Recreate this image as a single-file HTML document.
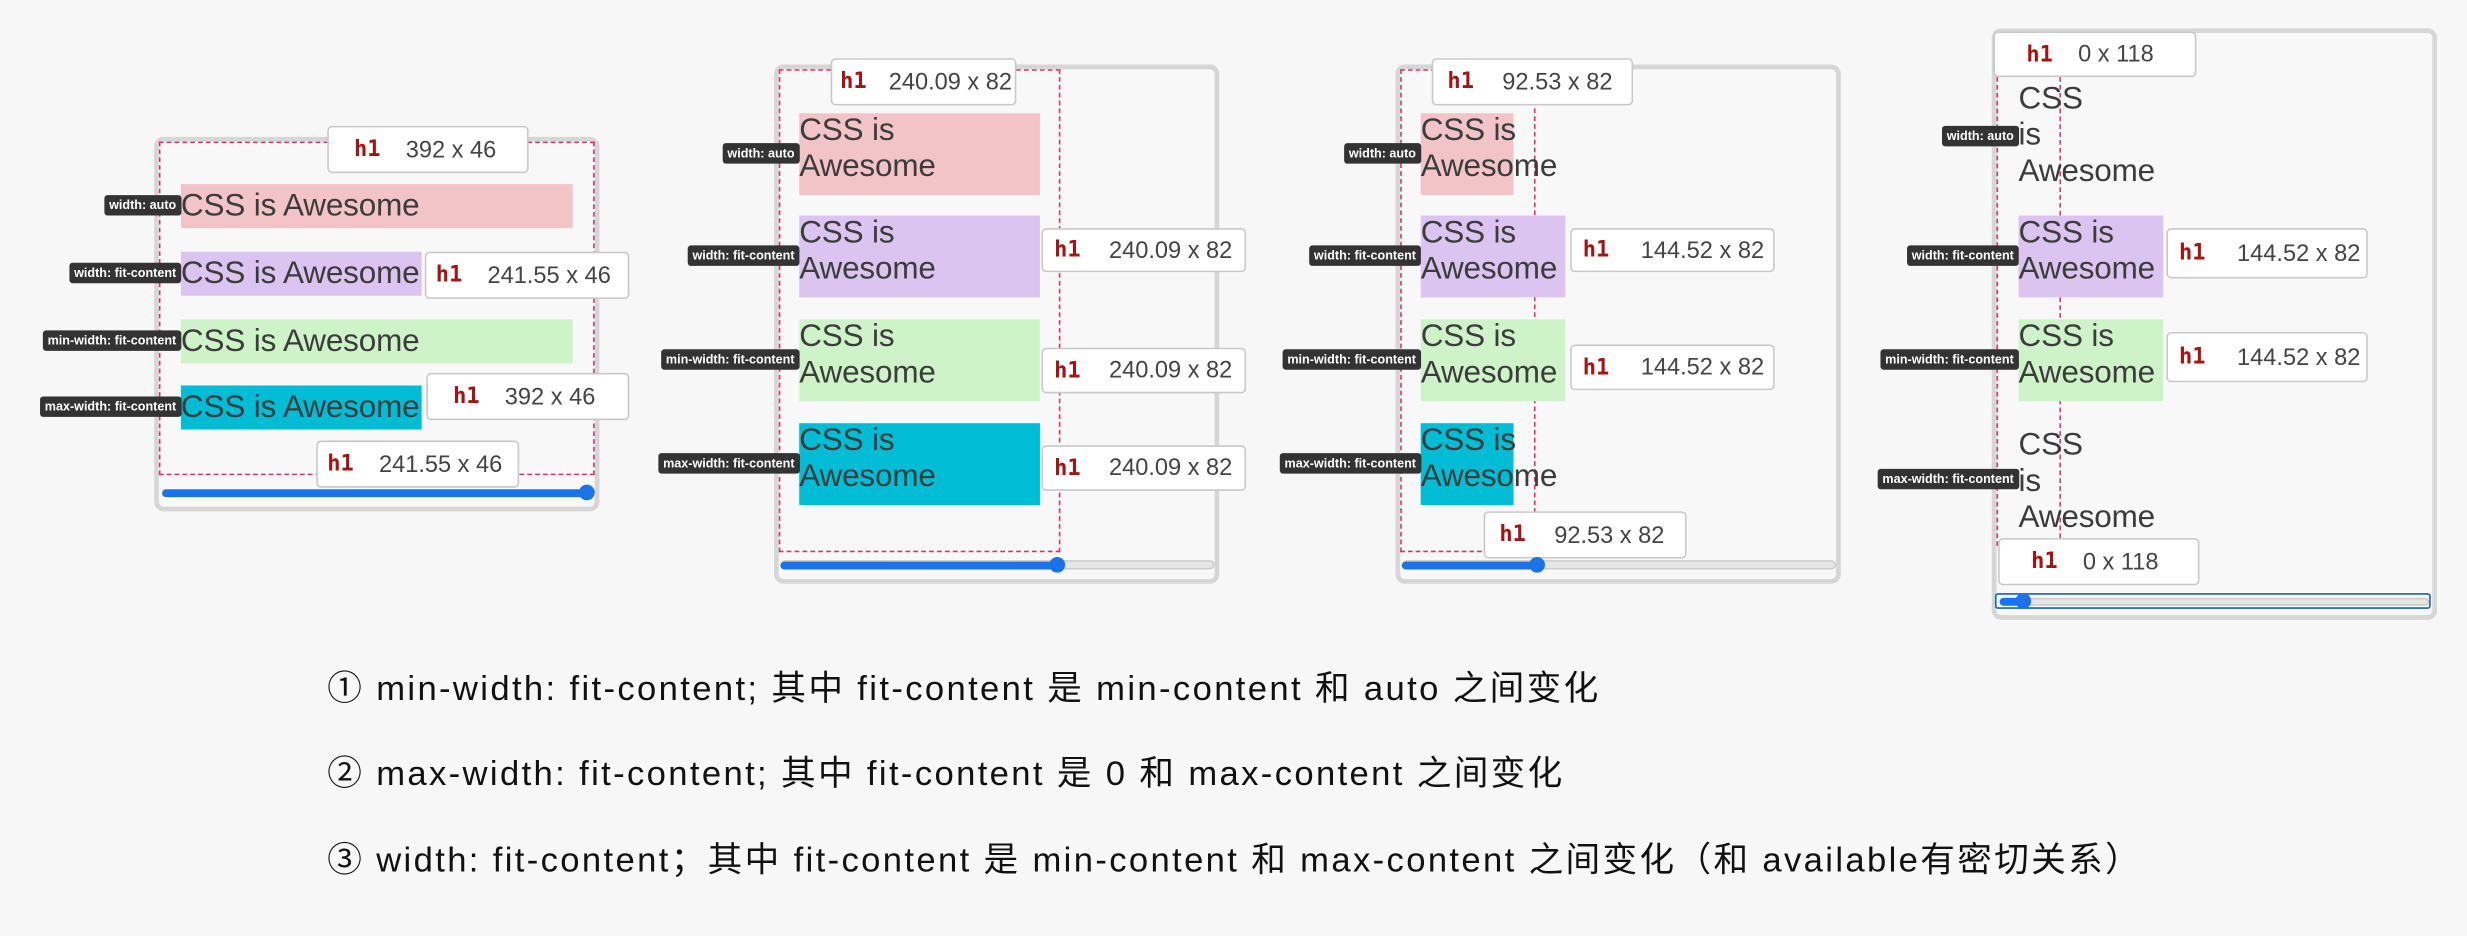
<!DOCTYPE html>
<html><head><meta charset="utf-8"><style>
html,body{margin:0;padding:0;background:#f7f7f7;width:2467px;height:936px;overflow:hidden}
#w{position:absolute;left:0;top:0;width:1568px;height:595px;transform:scale(1.5733);transform-origin:0 0;font-family:"Liberation Sans","Noto Sans CJK SC",sans-serif}
.a{position:absolute}
.panel{position:absolute;border:3px solid #d6d6d6;border-radius:6px;background:#f8f8f8;box-sizing:border-box}
.dash{position:absolute;border:1px dashed #d9336a;box-sizing:border-box}
.bar{position:absolute;color:#3c3c3c;font-size:20px;line-height:23px;white-space:nowrap;letter-spacing:-0.1px}
.lab{position:absolute;background:#333;color:#fff;font-size:8px;font-weight:bold;line-height:13px;height:13px;padding:0 3px;border-radius:2px;white-space:nowrap;transform:translateX(-100%)}
.tip{position:absolute;background:#fff;border:1px solid #c8c8c8;border-radius:3px;box-sizing:border-box;font-size:15px;color:#444;white-space:nowrap;display:flex;align-items:center}
.tip b{color:#a31515;font-family:"DejaVu Sans Mono",monospace;font-size:14px;margin:0 16px 0 16px}
.track{position:absolute;height:4px;background:#e6e6e6;border:1px solid #ccc;border-radius:3px}
.fill{position:absolute;height:5px;background:#1a73e8;border-radius:3px}
.knob{position:absolute;width:10px;height:10px;border-radius:50%;background:#1a73e8}
.txt{position:absolute;left:208px;font-size:22px;color:#111;white-space:nowrap;letter-spacing:1.5px}
</style></head><body><div id="w">

<!-- Panel 1 -->
<div class="panel" style="left:98px;top:87px;width:283px;height:238px"></div>
<div class="dash" style="left:101px;top:90px;width:277px;height:212px"></div>
<div class="bar" style="left:115px;top:117px;width:249px;height:28px;background:#f2c4c7;line-height:28px">CSS is Awesome</div>
<div class="bar" style="left:115px;top:160px;width:153px;height:28px;background:#dcc4f0;line-height:28px">CSS is Awesome</div>
<div class="bar" style="left:115px;top:203px;width:249px;height:28px;background:#cff3c8;line-height:28px">CSS is Awesome</div>
<div class="bar" style="left:115px;top:245px;width:153px;height:28px;background:#00bcd4;line-height:28px">CSS is Awesome</div>
<div class="lab" style="left:115px;top:124px">width: auto</div>
<div class="lab" style="left:115px;top:167px">width: fit-content</div>
<div class="lab" style="left:115px;top:210px">min-width: fit-content</div>
<div class="lab" style="left:115px;top:252px">max-width: fit-content</div>
<div class="tip" style="left:208px;top:80px;width:128px;height:30px"><b>h1</b>392 x 46</div>
<div class="tip" style="left:270px;top:160px;width:130px;height:30px"><b style="margin-left:6px">h1</b>241.55 x 46</div>
<div class="tip" style="left:271px;top:237px;width:129px;height:30px"><b>h1</b>392 x 46</div>
<div class="tip" style="left:201px;top:280px;width:129px;height:30px"><b style="margin-left:6px">h1</b>241.55 x 46</div>
<div class="fill" style="left:103px;top:311px;width:270px"></div>
<div class="knob" style="left:368px;top:308px"></div>

<!-- Panel 2 -->
<div class="panel" style="left:492px;top:41px;width:283px;height:330px"></div>
<div class="dash" style="left:495px;top:44px;width:179px;height:307px"></div>
<div class="bar" style="left:508px;top:72px;width:153px;height:52px;background:#f2c4c7">CSS is<br>Awesome</div>
<div class="bar" style="left:508px;top:137px;width:153px;height:52px;background:#dcc4f0">CSS is<br>Awesome</div>
<div class="bar" style="left:508px;top:203px;width:153px;height:52px;background:#cff3c8">CSS is<br>Awesome</div>
<div class="bar" style="left:508px;top:269px;width:153px;height:52px;background:#00bcd4">CSS is<br>Awesome</div>
<div class="lab" style="left:508px;top:91px">width: auto</div>
<div class="lab" style="left:508px;top:156px">width: fit-content</div>
<div class="lab" style="left:508px;top:222px">min-width: fit-content</div>
<div class="lab" style="left:508px;top:288px">max-width: fit-content</div>
<div class="tip" style="left:528px;top:37px;width:118px;height:30px"><b style="margin:0 14px 0 5px">h1</b>240.09 x 82</div>
<div class="tip" style="left:662px;top:145px;width:130px;height:28px"><b style="margin:0 18px 0 7px">h1</b>240.09 x 82</div>
<div class="tip" style="left:662px;top:221px;width:130px;height:29px"><b style="margin:0 18px 0 7px">h1</b>240.09 x 82</div>
<div class="tip" style="left:662px;top:283px;width:130px;height:29px"><b style="margin:0 18px 0 7px">h1</b>240.09 x 82</div>
<div class="track" style="left:496px;top:356px;width:274px"></div>
<div class="fill" style="left:496px;top:357px;width:176px"></div>
<div class="knob" style="left:667px;top:354px"></div>

<!-- Panel 3 -->
<div class="panel" style="left:887px;top:41px;width:283px;height:330px"></div>
<div class="dash" style="left:890px;top:44px;width:86px;height:307px"></div>
<div class="bar" style="left:903px;top:72px;width:59px;height:52px;background:#f2c4c7">CSS is<br>Awesome</div>
<div class="bar" style="left:903px;top:137px;width:92px;height:52px;background:#dcc4f0">CSS is<br>Awesome</div>
<div class="bar" style="left:903px;top:203px;width:92px;height:52px;background:#cff3c8">CSS is<br>Awesome</div>
<div class="bar" style="left:903px;top:269px;width:59px;height:52px;background:#00bcd4">CSS is<br>Awesome</div>
<div class="lab" style="left:903px;top:91px">width: auto</div>
<div class="lab" style="left:903px;top:156px">width: fit-content</div>
<div class="lab" style="left:903px;top:222px">min-width: fit-content</div>
<div class="lab" style="left:903px;top:288px">max-width: fit-content</div>
<div class="tip" style="left:910px;top:37px;width:128px;height:30px"><b style="margin:0 18px 0 9px">h1</b>92.53 x 82</div>
<div class="tip" style="left:998px;top:145px;width:130px;height:28px"><b style="margin:0 20px 0 7px">h1</b>144.52 x 82</div>
<div class="tip" style="left:998px;top:219px;width:130px;height:29px"><b style="margin:0 20px 0 7px">h1</b>144.52 x 82</div>
<div class="tip" style="left:943px;top:325px;width:129px;height:30px"><b style="margin:0 18px 0 9px">h1</b>92.53 x 82</div>
<div class="track" style="left:891px;top:356px;width:274px"></div>
<div class="fill" style="left:891px;top:357px;width:86px"></div>
<div class="knob" style="left:972px;top:354px"></div>

<!-- Panel 4 -->
<div class="panel" style="left:1266px;top:18px;width:283px;height:376px"></div>
<div class="a" style="left:1269px;top:49px;height:298px;border-left:1px dashed #d9336a"></div>
<div class="a" style="left:1309px;top:49px;height:298px;border-left:1px dashed #d9336a"></div>
<div class="bar" style="left:1283px;top:52px">CSS<br>is<br>Awesome</div>
<div class="bar" style="left:1283px;top:137px;width:92px;height:52px;background:#dcc4f0">CSS is<br>Awesome</div>
<div class="bar" style="left:1283px;top:203px;width:92px;height:52px;background:#cff3c8">CSS is<br>Awesome</div>
<div class="bar" style="left:1283px;top:272px">CSS<br>is<br>Awesome</div>
<div class="lab" style="left:1283px;top:80px">width: auto</div>
<div class="lab" style="left:1283px;top:156px">width: fit-content</div>
<div class="lab" style="left:1283px;top:222px">min-width: fit-content</div>
<div class="lab" style="left:1283px;top:298px">max-width: fit-content</div>
<div class="tip" style="left:1267px;top:20px;width:129px;height:29px"><b style="margin:0 16px 0 20px">h1</b>0 x 118</div>
<div class="tip" style="left:1377px;top:145px;width:128px;height:32px"><b style="margin:0 20px 0 7px">h1</b>144.52 x 82</div>
<div class="tip" style="left:1377px;top:211px;width:128px;height:32px"><b style="margin:0 20px 0 7px">h1</b>144.52 x 82</div>
<div class="tip" style="left:1270px;top:342px;width:128px;height:30px"><b style="margin:0 16px 0 20px">h1</b>0 x 118</div>
<div class="a" style="left:1268px;top:377px;width:277px;height:10px;border:1.5px solid #1a5fb4;border-radius:2px;box-sizing:border-box"></div>
<div class="track" style="left:1271px;top:380px;width:271px;height:3px"></div>
<div class="fill" style="left:1271px;top:380px;width:16px"></div>
<div class="knob" style="left:1281px;top:377px"></div>

<div class="txt" style="top:420px">① min-width: fit-content; 其中 fit-content 是 min-content 和 auto 之间变化</div>
<div class="txt" style="top:474px">② max-width: fit-content; 其中 fit-content 是 0 和 max-content 之间变化</div>
<div class="txt" style="top:529px">③ width: fit-content；其中 fit-content 是 min-content 和 max-content 之间变化（和 available有密切关系）</div>
</div></body></html>
